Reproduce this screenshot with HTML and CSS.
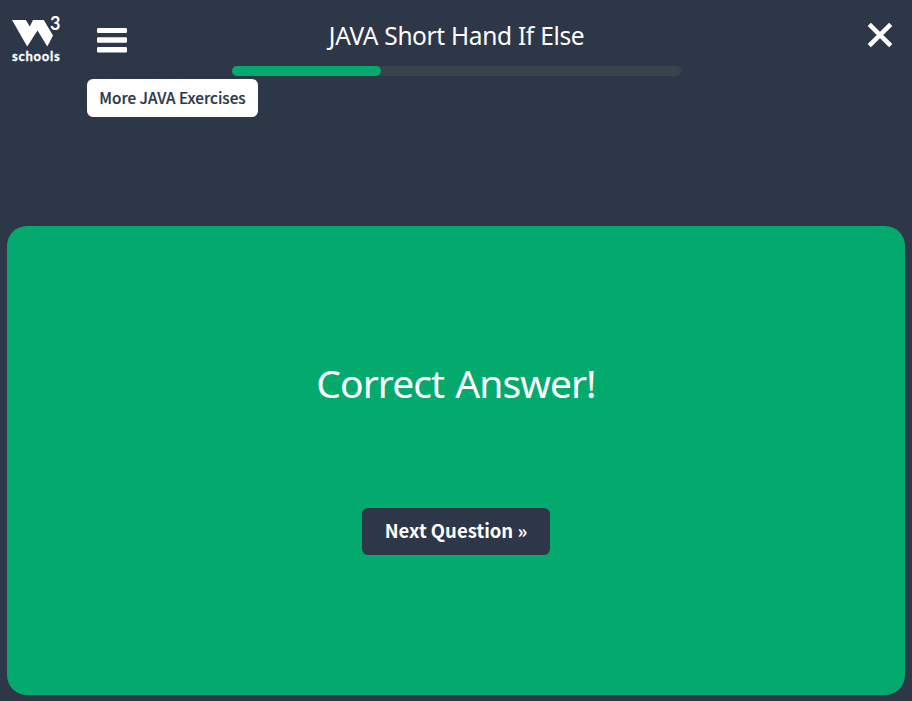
FILE: index.html
```html
<!DOCTYPE html>
<html lang="en">
<head>
<meta charset="utf-8">
<title>JAVA Short Hand If Else</title>
<link rel="stylesheet" href="styles.css">
</head>
<body>
<header class="topbar">
  <a class="logo" aria-label="w3schools">
    <svg class="logo-mark" width="42" height="27" viewBox="0 0 42 27"><path d="M0 0H13.800L17.800 6.500L21 0H31.800L41 15.500L35.300 26.500L25.500 10.500L15.200 26.500Z" fill="#fff"/></svg>
    <span class="logo-three">3</span>
    <span class="logo-name">schools</span>
  </a>
  <div class="menu">
    <svg class="bars" width="30" height="25" viewBox="0 0 30 25"><g fill="#fff"><rect width="30" height="5" rx="1.200"/><rect y="9.300" width="30" height="5.500" rx="1.200"/><rect y="19" width="30" height="5.500" rx="1.200"/></g></svg>
    <span class="tooltip">More JAVA Exercises</span>
  </div>
  <div class="heading">
    <h1 class="title">JAVA Short Hand If Else</h1>
    <div class="track"><div class="fill"></div></div>
  </div>
  <svg class="close" width="26" height="26" viewBox="0 0 26 26"><path d="M2.300 2.300L23.700 23.700M23.700 2.300L2.300 23.700" stroke="#fff" stroke-width="4.500"/></svg>
</header>
<main class="card">
  <h2 class="result">Correct Answer!</h2>
  <button class="next">Next Question »</button>
</main>
</body>
</html>
```
FILE: styles.css
```css
* { box-sizing: border-box; }
body {
  margin: 0;
  height: 701px;
  overflow: hidden;
  background: #2d3748;
  color: #fff;
  font-family: "Noto Sans CJK SC", "Noto Sans", sans-serif;
}
.topbar {
  display: grid;
  grid-template-columns: 86px 146px 449px 1fr;
  height: 226px;
}
.logo { position: relative; padding: 20px 0 0 12px; line-height: 0; }
.logo-mark { display: block; }
.logo-three {
  position: absolute;
  left: 50px;
  top: 13px;
  font: 700 18px/20px Lato, sans-serif;
}
.logo-name {
  display: block;
  margin-top: 1px;
  font: 700 13px/16px Lato, sans-serif;
  letter-spacing: 0.75px;
  -webkit-text-stroke: 0.3px #fff;
}
.menu { position: relative; padding: 28px 0 0 11px; }
.bars { display: block; }
.tooltip {
  position: absolute;
  left: 1px;
  top: 79px;
  width: 171px;
  height: 38px;
  border-radius: 6px;
  background: #fff;
  color: #2d3748;
  font-size: 15.3px;
  font-weight: 500;
  line-height: 36px;
  text-align: center;
  white-space: nowrap;
  -webkit-text-stroke: 0.2px #2d3748;
}
.heading { padding-top: 18px; }
.title {
  margin: 0 0 12px;
  font: 400 24.5px/36px "Noto Sans", sans-serif;
  letter-spacing: -0.42px;
  word-spacing: 0.5px;
  text-align: center;
  white-space: nowrap;
}
.track { height: 10px; border-radius: 5px; background: #38444d; }
.fill { width: 149px; height: 10px; border-radius: 5px; background: #04aa6d; }
.close { justify-self: end; margin: 22px 19px 0 0; }
.card {
  display: flex;
  flex-direction: column;
  align-items: center;
  height: 469px;
  margin: 0 7px;
  padding-top: 129px;
  border-radius: 20px;
  background: #04aa6d;
}
.result {
  margin: 0;
  font: 400 39px/56px "Noto Sans", sans-serif;
  letter-spacing: -0.95px;
  word-spacing: 2px;
  white-space: nowrap;
}
.next {
  width: 188px;
  height: 47px;
  margin-top: 97px;
  padding: 0 0 2px;
  border: 0;
  border-radius: 6px;
  background: #2d3748;
  color: #fff;
  font: 700 18.5px/45px "Noto Sans CJK SC", sans-serif;
  white-space: nowrap;
}
```
